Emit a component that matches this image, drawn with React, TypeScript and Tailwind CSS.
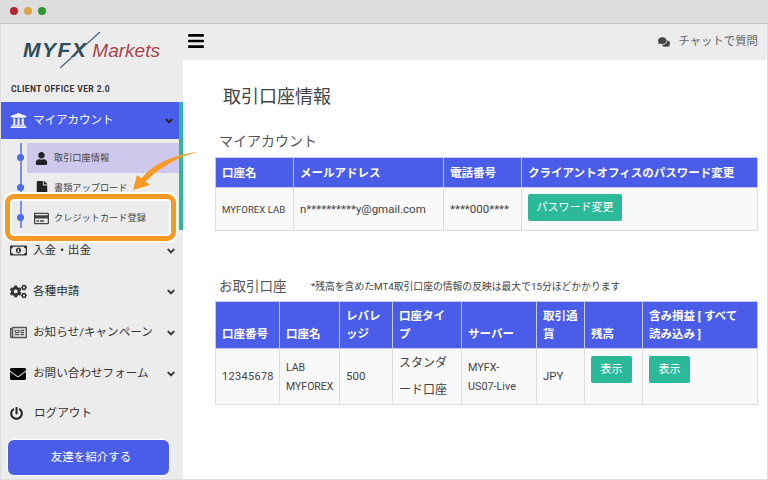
import { FaAngleDown, FaBars, FaCogs, FaComments, FaEnvelope, FaFile, FaPowerOff, FaRegCreditCard, FaRegMoneyBillAlt, FaRegNewspaper, FaUniversity, FaUser } from "react-icons/fa";
import type { ReactNode } from "react";

const font = "font-['Roboto','Noto_Sans_CJK_JP',sans-serif]";

const menuRows = [
  { icon: <FaRegMoneyBillAlt className="text-[17px]" />, label: "入金・出金" },
  { icon: <FaCogs className="text-[17px]" />, label: "各種申請" },
  { icon: <FaRegNewspaper className="text-[17px] text-[#555]" />, label: "お知らせ/キャンペーン" },
  { icon: <FaEnvelope className="text-[16px] text-black" />, label: "お問い合わせフォーム" },
];

function SubItem({ icon, label, active }: { icon: ReactNode; label: string; active?: boolean }) {
  return (
    <div className={`relative flex items-center h-[30px] ml-[26px] pl-[7px] text-[9.2px] text-[#444] ${active ? "bg-[#cdc8ec]" : ""}`}>
      <span className="absolute left-[-10px] top-[11px] w-[7px] h-[7px] rounded-full bg-[#4a6cf0]" />
      <span className="w-[15px] flex justify-center mr-[5px]">{icon}</span>
      {label}
    </div>
  );
}

function Sidebar() {
  return (
    <aside className="w-[182px] shrink-0 bg-[#ececec] flex flex-col relative">
      <div className="h-[78px] shrink-0 flex flex-col">
        <div className="relative h-[30px] mt-[8px] pt-[6px] ml-[22px] flex items-baseline font-['Liberation_Sans',sans-serif]">
          <span className="italic font-bold text-[21px] tracking-[1.5px] leading-[24px] text-[#2f4f5c]">MYFX</span>
          <span className="italic text-[19px] leading-[24px] text-[#a8434b] ml-[5px]">Markets</span>
          <svg className="absolute left-[37px] top-0" width="40" height="36" viewBox="0 0 40 36">
            <path d="M0 36 L40 0" stroke="#3b5966" strokeWidth="1.2" fill="none" />
          </svg>
        </div>
        <div className="text-[8.5px] font-bold text-[#333] tracking-[0.4px] ml-[10px] mt-[21px] leading-[12px]">CLIENT OFFICE VER 2.0</div>
      </div>
      <div className="border-r-4 border-[#2bb99a] shrink-0">
        <div className="h-[37px] bg-[#4a5de8] text-white flex items-center pl-[9px] pr-[4px] text-[11.5px]">
          <FaUniversity className="text-[17px] mr-[6px] text-[#f0f0fa]" />
          <span className="flex-1">マイアカウント</span>
          <FaAngleDown className="text-[#222] text-[12px]" />
        </div>
        <div className="relative pt-[4px] h-[91px]">
          <span className="absolute left-[19px] top-[4px] bottom-[2px] w-[1.5px] bg-[#7c8bf0]" />
          <SubItem active icon={<FaUser className="text-[13px] text-[#222]" />} label="取引口座情報" />
          <SubItem icon={<FaFile className="text-[14px] text-[#222]" />} label="書類アップロード" />
          <SubItem icon={<FaRegCreditCard className="text-[15px] text-[#444]" />} label="クレジットカード登録" />
        </div>
      </div>
      {menuRows.map((r) => (
        <div key={r.label} className="h-[41px] shrink-0 flex items-center pl-[9px] pr-[6px] text-[11.6px] text-[#333]">
          <span className="w-[23px] flex">{r.icon}</span>
          <span className="flex-1 whitespace-nowrap">{r.label}</span>
          <FaAngleDown className="text-[#333] text-[12px]" />
        </div>
      ))}
      <div className="h-[39px] shrink-0 flex items-center pl-[9px] text-[11.6px] text-[#333]">
        <span className="w-[24px] flex"><FaPowerOff className="text-[13px] text-[#222]" /></span>
        ログアウト
      </div>
      <button className="mt-[6px] ml-[6px] w-[163px] h-[37px] shrink-0 rounded-[7px] bg-[#4a5de8] border border-white pl-[5px] text-white text-[11.5px]">友達を紹介する</button>
      {/* orange highlight */}
      <div className="absolute left-[4px] top-[170px] w-[171px] h-[47px] rounded-[9px] border-[5px] border-[#f79a22] shadow-[0_0_0_2px_#fff,inset_0_0_0_2px_#fff]" />
    </aside>
  );
}

const th = "border border-[#c5c9ef] bg-[#4a5de8] text-white font-bold text-[11.5px] leading-[18px] text-left align-bottom pl-[6px] pr-[5px] py-[5px]";
const td = "border border-[#dedede] bg-[#f9f9f9] text-[#444] leading-[19px] align-middle px-[6px]";
const btn = "bg-[#2bb99a] text-white rounded-[2px] h-[27px]";

function Main() {
  return (
    <main className="flex-1 bg-white flex flex-col min-w-0">
      <div className="h-[36px] shrink-0 bg-[#ececec] flex items-center pl-[4px] pr-[9px]">
        <FaBars className="text-[18px] text-black mb-[2px]" />
        <div className="ml-auto flex items-center text-[11.4px] text-[#666]">
          <FaComments className="text-[12px] mr-[8px] text-[#444]" />
          チャットで質問
        </div>
      </div>
      <div className="pl-[32px] pr-[9px]">
        <h1 className="ml-[8px] mt-[24px] text-[18px] leading-[26px] text-[#444]">取引口座情報</h1>
        <h2 className="ml-[4px] mt-[21px] text-[14px] leading-[20px] text-[#555]">マイアカウント</h2>
        <table className="mt-[6px] w-[543px] table-fixed border-collapse">
          <colgroup>
            <col className="w-[78px]" />
            <col className="w-[150px]" />
            <col className="w-[78px]" />
            <col />
          </colgroup>
          <thead>
            <tr className="h-[30px]">
              <th className={th}>口座名</th>
              <th className={th}>メールアドレス</th>
              <th className={th}>電話番号</th>
              <th className={`${th} whitespace-nowrap`}>クライアントオフィスのパスワード変更</th>
            </tr>
          </thead>
          <tbody>
            <tr className="h-[43px]">
              <td className={`${td} text-[9.6px] whitespace-nowrap`}>MYFOREX LAB</td>
              <td className={`${td} text-[11.5px] whitespace-nowrap`}>n**********y@gmail.com</td>
              <td className={`${td} text-[11.5px] whitespace-nowrap`}>****000****</td>
              <td className={`${td} pb-[4px]`}>
                <button className={`${btn} text-[11px] w-[94px]`}>パスワード変更</button>
              </td>
            </tr>
          </tbody>
        </table>
        <div className="mt-[45px] ml-[4px] flex items-center h-[20px]">
          <span className="text-[13.5px] text-[#555] w-[92px]">お取引口座</span>
          <span className="text-[9.8px] text-[#444] whitespace-nowrap mt-[3px]">*残高を含めたMT4取引口座の情報の反映は最大で15分ほどかかります</span>
        </div>
        <table className="mt-[5px] w-[543px] table-fixed border-collapse">
          <colgroup>
            <col className="w-[64px]" />
            <col className="w-[60px]" />
            <col className="w-[53px]" />
            <col className="w-[69px]" />
            <col className="w-[75px]" />
            <col className="w-[48px]" />
            <col className="w-[58px]" />
            <col />
          </colgroup>
          <thead>
            <tr className="h-[46px]">
              <th className={th}>口座番号</th>
              <th className={th}>口座名</th>
              <th className={th}>レバレッジ</th>
              <th className={th}>口座タイプ</th>
              <th className={th}>サーバー</th>
              <th className={th}>取引通貨</th>
              <th className={th}>残高</th>
              <th className={th}>含み損益 [ すべて<br />読み込み ]</th>
            </tr>
          </thead>
          <tbody>
            <tr className="h-[56px]">
              <td className={`${td} text-[11px] tracking-[0.3px]`}>12345678</td>
              <td className={`${td} text-[10.5px]`}>LAB MYFOREX</td>
              <td className={`${td} text-[11.5px]`}>500</td>
              <td className={`${td} text-[12px] leading-[27px]`}>スタンダード口座</td>
              <td className={`${td} text-[10.8px]`}>MYFX-<br />US07-Live</td>
              <td className={`${td} text-[11.5px]`}>JPY</td>
              <td className={`${td} align-top pt-[7px]`}><button className={`${btn} text-[11px] w-[41px]`}>表示</button></td>
              <td className={`${td} align-top pt-[7px]`}><button className={`${btn} text-[11px] w-[41px]`}>表示</button></td>
            </tr>
          </tbody>
        </table>
      </div>
    </main>
  );
}

export default function App() {
  return (
    <div className={`relative w-[768px] h-[480px] overflow-hidden bg-white flex flex-col ${font}`}>
      <div className="h-[24px] bg-[#dddddd] border-b border-[#c4c4c4] flex items-center gap-[6px] pl-[10px] pb-[1px] shrink-0">
        <span className="w-[8px] h-[8px] rounded-full bg-[#b3242b]" />
        <span className="w-[8px] h-[8px] rounded-full bg-[#dca540]" />
        <span className="w-[8px] h-[8px] rounded-full bg-[#2a9a2e]" />
      </div>
      <div className="flex flex-1 min-h-0 border-l border-r border-b border-[#dddddd]">
        <Sidebar />
        <Main />
      </div>
      {/* arrow pointing to the card item */}
      <svg className="absolute left-[125px] top-[148px]" width="75" height="46" viewBox="0 0 75 46">
        <path d="M72 4 C50 7 30 14 16 31 L20 34 C34 20 52 9 72 4 Z" fill="#f79a22" />
        <path d="M8 42 L12 27 L25 37 Z" fill="#f79a22" />
      </svg>
    </div>
  );
}
